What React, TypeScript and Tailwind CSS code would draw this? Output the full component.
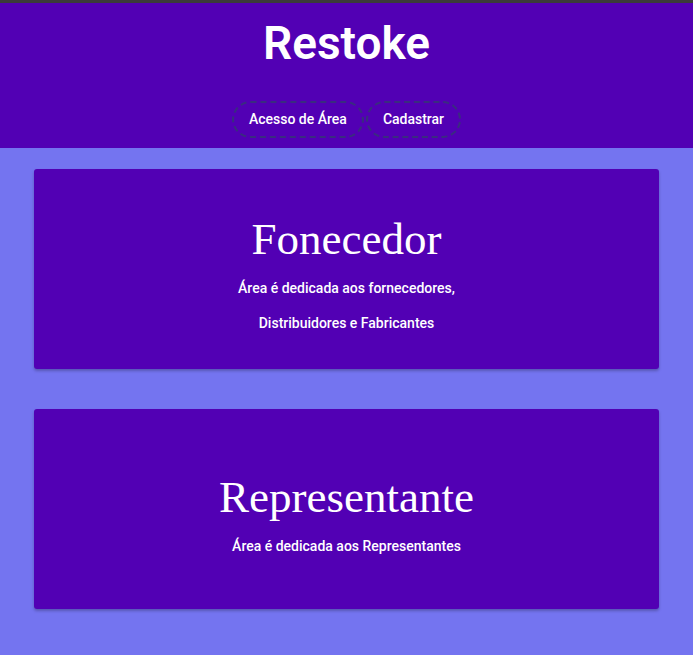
import React from "react";

const roboto = { fontFamily: "Roboto, 'Liberation Sans', sans-serif" };

function Card({ title, lines }: { title: string; lines: string[] }) {
  return (
    <div className="h-[200px] rounded-[3px] bg-[#5200b4] shadow-[0_2px_3px_rgba(0,0,0,0.25)] flex flex-col items-center justify-center pt-2 text-white">
      <h2 className="font-['Liberation_Serif',serif] text-[45px] leading-[52px] mb-[14px]">{title}</h2>
      {lines.map((l, i) => (
        <p key={i} className={`font-['Roboto',sans-serif] text-[14px] leading-[19px] font-medium ${i < lines.length - 1 ? "mb-4" : ""}`}>
          {l}
        </p>
      ))}
    </div>
  );
}

export default function App() {
  return (
    <div className="min-h-screen bg-[#7474f0]" style={roboto}>
      <div className="h-[3px] bg-[#3b3b3b]" />
      <header className="h-[145px] bg-[#5200b4] flex flex-col items-center">
        <h1 className="font-['Roboto',sans-serif] font-semibold text-white text-[46px] leading-[54px] mt-[13px]">Restoke</h1>
        <nav className="flex gap-[2px] mt-[31px]">
          <button className="h-[37px] px-[15px] rounded-full border-2 border-dashed border-[#3a2c80] text-white text-[14px] font-medium font-['Roboto',sans-serif]">
            Acesso de Área
          </button>
          <button className="h-[37px] px-[15px] rounded-full border-2 border-dashed border-[#3a2c80] text-white text-[14px] font-medium font-['Roboto',sans-serif]">
            Cadastrar
          </button>
        </nav>
      </header>
      <main className="px-[34px] pt-[21px] pb-10 flex flex-col gap-[40px]">
        <Card title="Fonecedor" lines={["Área é dedicada aos fornecedores,", "Distribuidores e Fabricantes"]} />
        <Card title="Representante" lines={["Área é dedicada aos Representantes"]} />
      </main>
    </div>
  );
}
